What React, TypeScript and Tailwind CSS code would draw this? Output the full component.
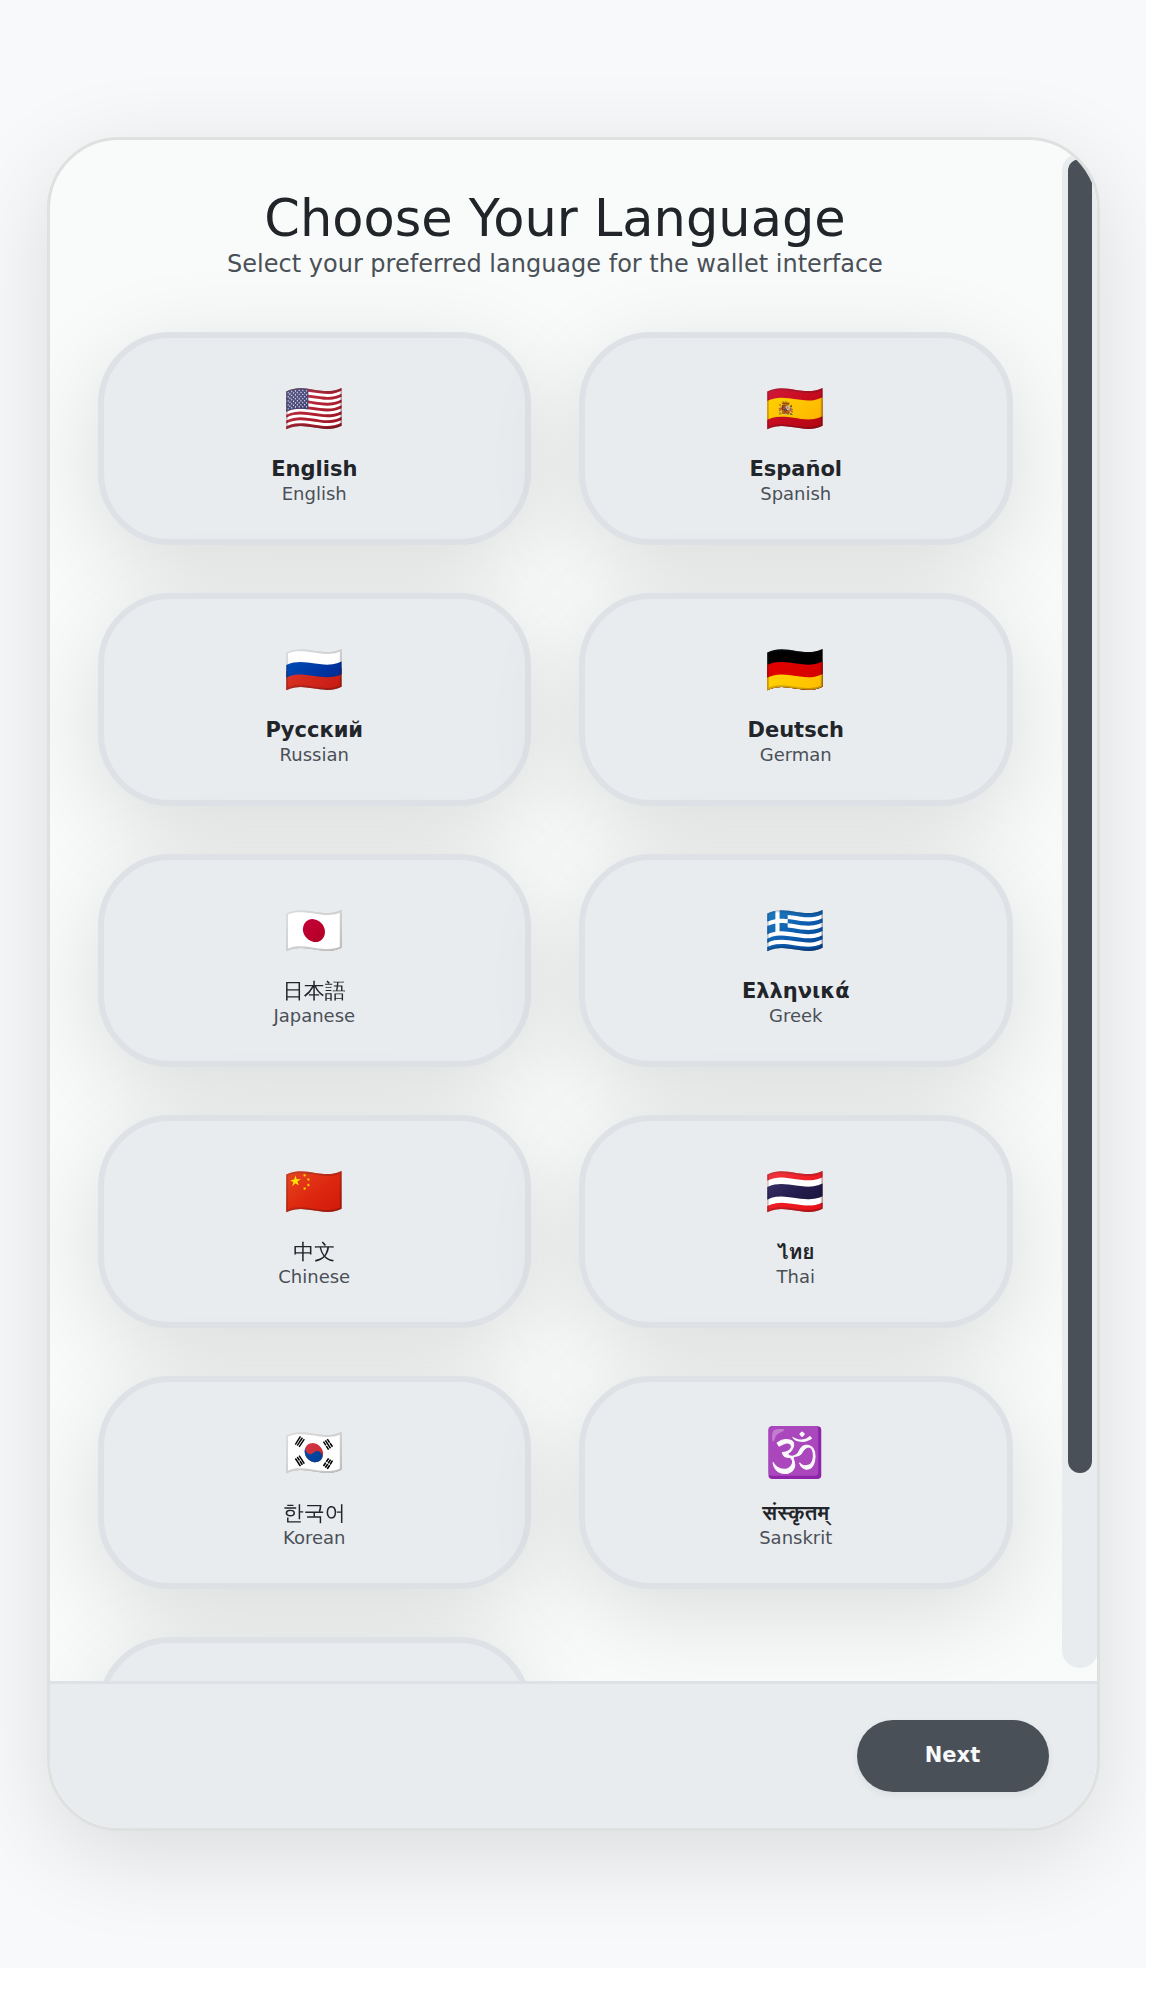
const languages = [
  { flag: "🇺🇸", name: "English", english: "English" },
  { flag: "🇪🇸", name: "Español", english: "Spanish" },
  { flag: "🇷🇺", name: "Русский", english: "Russian" },
  { flag: "🇩🇪", name: "Deutsch", english: "German" },
  { flag: "🇯🇵", name: "日本語", english: "Japanese" },
  { flag: "🇬🇷", name: "Ελληνικά", english: "Greek" },
  { flag: "🇨🇳", name: "中文", english: "Chinese" },
  { flag: "🇹🇭", name: "ไทย", english: "Thai" },
  { flag: "🇰🇷", name: "한국어", english: "Korean" },
  { flag: "🕉️", name: "संस्कृतम्", english: "Sanskrit" },
];

const tile =
  "flex h-[213px] flex-col items-center rounded-[72px] border-6 border-[#dee2e6] bg-[#e9ecef] pt-[34px] shadow-[0_24px_96px_rgba(0,0,0,0.12)]";

function LanguageCard({ flag, name, english }: { flag: string; name: string; english: string }) {
  return (
    <button className={tile}>
      <span className="block h-[72px] font-['DejaVu_Sans','Noto_Color_Emoji',sans-serif] text-[48px] leading-[72px]">
        {flag}
      </span>
      <span className="mt-[13px] block h-[25px] text-[21px] leading-[25px] font-semibold text-[#212529]">{name}</span>
      <span className="mt-px block text-[18px] leading-[22px] text-[#495057]">{english}</span>
    </button>
  );
}

export default function App() {
  return (
    <div className="h-[1992px] w-[1170px] bg-white font-['DejaVu_Sans','WenQuanYi_Zen_Hei','Loma','FreeSans',sans-serif]">
      <div className="h-[1968px] w-[1146px] overflow-hidden bg-[#f8f9fb] pt-[137px] pl-[47px]">
        <main className="flex h-[1694px] w-[1053px] flex-col overflow-hidden rounded-[72px] border-3 border-[#dfe1e0] bg-[#f9fbfa] shadow-[0_24px_96px_rgba(0,0,0,0.12)]">
          <div className="flex h-[1541px] overflow-hidden">
            <section className="w-[1012px] shrink-0 overflow-hidden pt-12 pl-[47.5px]">
              <header className="w-[915px] text-center">
                <h1 className="text-[51px] leading-[61px] text-[#212529]">Choose Your Language</h1>
                <p className="mt-px text-[24px] leading-[29px] text-[#495057]">
                  Select your preferred language for the wallet interface
                </p>
              </header>
              <div className="mt-[53px] grid w-[915px] grid-cols-2 gap-12">
                {languages.map((l) => (
                  <LanguageCard key={l.english} {...l} />
                ))}
                <div className={tile} />
              </div>
            </section>
            <div className="my-[13px] w-9 shrink-0 rounded-[18px] bg-[#e9ecef] p-1.5">
              <div className="h-[1314px] rounded-xl bg-[#495057]" />
            </div>
          </div>
          <footer className="flex h-[147px] items-center justify-end border-t-3 border-[#dee2e6] bg-[#e9ecef] pr-12">
            <button className="h-[72px] w-[192px] rounded-[36px] bg-[#495057] pr-px text-[21px] font-semibold text-[#f8f9fa] shadow-[0_3px_9px_rgba(0,0,0,0.06)]">
              Next
            </button>
          </footer>
        </main>
      </div>
    </div>
  );
}
